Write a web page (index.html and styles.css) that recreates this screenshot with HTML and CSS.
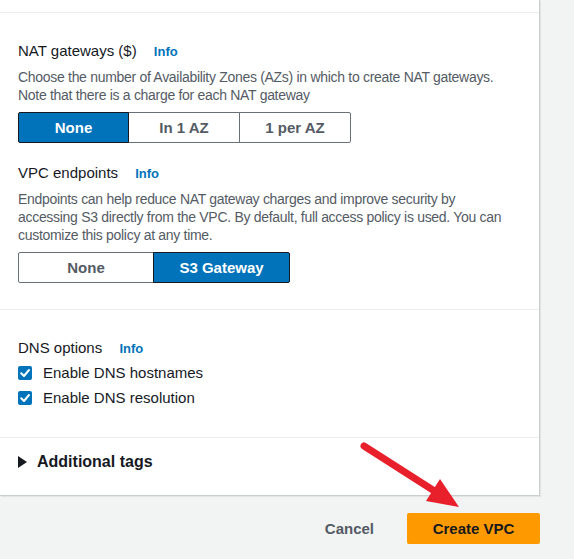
FILE: index.html
```html
<!DOCTYPE html>
<html lang="en">
<head>
<meta charset="utf-8">
<title>Create VPC</title>
<link rel="stylesheet" href="styles.css">
</head>
<body>
<div class="page">
  <div class="card">
    <div class="section stub"></div>
    <div class="section options">
      <div class="field">
        <div class="label">NAT gateways ($) <a class="info">Info</a></div>
        <div class="desc">Choose the number of Availability Zones (AZs) in which to create NAT gateways. Note that there is a charge for each NAT gateway</div>
        <div class="seg seg-3">
          <button class="seg-btn selected">None</button>
          <button class="seg-btn">In 1 AZ</button>
          <button class="seg-btn">1 per AZ</button>
        </div>
      </div>
      <div class="field">
        <div class="label">VPC endpoints <a class="info">Info</a></div>
        <div class="desc">Endpoints can help reduce NAT gateway charges and improve security by accessing S3 directly from the VPC. By default, full access policy is used. You can customize this policy at any time.</div>
        <div class="seg seg-2">
          <button class="seg-btn">None</button>
          <button class="seg-btn selected">S3 Gateway</button>
        </div>
      </div>
    </div>
    <div class="section dns">
      <div class="label">DNS options <a class="info">Info</a></div>
      <label class="check-row"><span class="checkbox"><svg viewBox="0 0 14 14" width="14" height="14"><path d="M3.2 7.2 L6 10 L11 4" fill="none" stroke="#fff" stroke-width="2" stroke-linecap="round" stroke-linejoin="round"/></svg></span>Enable DNS hostnames</label>
      <label class="check-row"><span class="checkbox"><svg viewBox="0 0 14 14" width="14" height="14"><path d="M3.2 7.2 L6 10 L11 4" fill="none" stroke="#fff" stroke-width="2" stroke-linecap="round" stroke-linejoin="round"/></svg></span>Enable DNS resolution</label>
    </div>
    <div class="section tags">
      <span class="caret"></span><span class="tags-title">Additional tags</span>
    </div>
  </div>
  <div class="actions">
    <button class="btn-link">Cancel</button>
    <button class="btn-primary">Create VPC</button>
  </div>
  <svg class="arrow" width="574" height="559" viewBox="0 0 574 559">
    <line x1="364" y1="446" x2="436" y2="492" stroke="#e8202b" stroke-width="7" stroke-linecap="round"/>
    <polygon points="440,479 459,507 426,501" fill="#e8202b"/>
  </svg>
</div>
</body>
</html>
```
FILE: styles.css
```css
* { box-sizing: border-box; }
html, body { margin: 0; padding: 0; }
body {
  background: #f2f3f3;
  font-family: "Liberation Sans", Arial, sans-serif;
  color: #16191f;
  width: 574px;
  height: 559px;
  overflow: hidden;
}
.page { position: relative; width: 574px; height: 559px; }
.card {
  width: 540px;
  background: #fff;
  border-right: 1px solid #c9cfcf;
  border-bottom: 1px solid #c9cfcf;
  box-shadow: 1px 1px 1px rgba(0,0,0,0.06);
}
.section { border-bottom: 1px solid #eaeded; padding: 0 18px; }
.section:last-child { border-bottom: none; }
.stub { height: 13px; }
.options { padding-top: 27px; padding-bottom: 26px; }
.field + .field { margin-top: 19px; }
.label {
  font-size: 15px;
  line-height: 22px;
  color: #16191f;
}
.info {
  color: #0073bb;
  font-weight: bold;
  font-size: 13px;
  margin-left: 13px;
}
.desc {
  margin-top: 5px;
  font-size: 14px;
  line-height: 18px;
  letter-spacing: -0.3px;
  color: #545b64;
  width: 500px;
}
.seg {
  display: flex;
  margin-top: 8px;
}
.seg-btn {
  height: 31px;
  border: 1px solid #687078;
  background: #fff;
  color: #545b64;
  font-family: inherit;
  font-weight: bold;
  font-size: 15px;
  padding: 0;
  margin: 0;
  margin-left: -1px;
}
.seg-btn:first-child { margin-left: 0; border-radius: 2px 0 0 2px; }
.seg-btn:last-child { border-radius: 0 2px 2px 0; }
.seg-btn.selected {
  background: #0073bb;
  color: #fff;
  border-color: #16191f;
  position: relative;
}
.seg-3 .seg-btn { width: 112px; }
.seg-3 .seg-btn:first-child { width: 111px; }
.seg-2 .seg-btn { width: 137px; }
.seg-2 .seg-btn:first-child { width: 136px; }
.dns { padding-top: 27px; padding-bottom: 27px; }
.check-row {
  display: flex;
  align-items: center;
  height: 25px;
  font-size: 15px;
  color: #16191f;
}
.checkbox {
  width: 14px;
  height: 14px;
  border-radius: 2px;
  background: #0073bb;
  margin-right: 11px;
  display: flex;
}
.tags {
  display: flex;
  align-items: center;
  padding-top: 12px;
  padding-bottom: 22px;
  height: 57px;
}
.caret {
  width: 0;
  height: 0;
  border-top: 6px solid transparent;
  border-bottom: 6px solid transparent;
  border-left: 9px solid #16191f;
  margin-right: 10px;
}
.tags-title {
  font-weight: bold;
  font-size: 16px;
  line-height: 22px;
}
.actions {
  width: 540px;
  display: flex;
  justify-content: flex-end;
  align-items: center;
  margin-top: 17px;
}
.btn-link {
  background: none;
  border: none;
  font-family: inherit;
  font-weight: bold;
  font-size: 15px;
  color: #545b64;
  padding: 0;
  margin-right: 33px;
}
.btn-primary {
  width: 133px;
  height: 31px;
  background: #ff9900;
  border: none;
  border-radius: 2px;
  font-family: inherit;
  font-weight: bold;
  font-size: 15px;
  color: #16191f;
  padding: 0;
}
.arrow {
  position: absolute;
  left: 0;
  top: 0;
  pointer-events: none;
}
```
